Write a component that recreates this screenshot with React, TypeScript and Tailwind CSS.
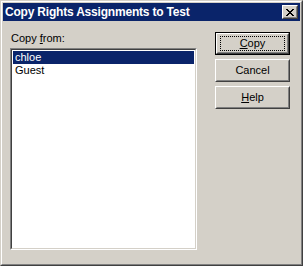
import React from "react";

function Btn({ label, u, def }: { label: string; u: number; def?: boolean }) {
  const text =
    u < 0 ? (
      <span>{label}</span>
    ) : (
      <span>
        {label.slice(0, u)}
        <span className="underline underline-offset-[1px]">{label[u]}</span>
        {label.slice(u + 1)}
      </span>
    );
  const inner = (
    <div className="h-full w-full border border-t-white border-l-white border-b-[#404040] border-r-[#404040]">
      <div className="h-full w-full border border-t-[#d4d0c8] border-l-[#d4d0c8] border-b-[#808080] border-r-[#808080] flex items-center justify-center">
        {def ? (
          <div className="border border-dotted border-black w-[65px] h-[15px] flex items-center justify-center">{text}</div>
        ) : (
          text
        )}
      </div>
    </div>
  );
  return (
    <div className={"w-[75px] h-[23px] " + (def ? "border border-black" : "")}>{inner}</div>
  );
}

export default function App() {
  return (
    <div
      className="w-[303px] h-[266px] bg-[#d4d0c8] border border-t-[#d4d0c8] border-l-[#d4d0c8] border-b-[#404040] border-r-[#404040] text-[11px] text-black"
      style={{ fontFamily: '"Liberation Sans", Arial, sans-serif' }}
    >
      <div className="h-full w-full border border-t-white border-l-white border-b-[#808080] border-r-[#808080] p-px flex flex-col">
        <div className="h-[18px] bg-[#0a246a] flex items-center justify-between pl-[2px] pr-[2px]">
          <span className="text-white font-bold text-[12px] leading-[14px] tracking-[-0.2px]">
            Copy Rights Assignments to Test
          </span>
          <div className="w-[16px] h-[14px] border border-t-white border-l-white border-b-[#404040] border-r-[#404040]">
            <div className="w-full h-full border border-t-[#d4d0c8] border-l-[#d4d0c8] border-b-[#808080] border-r-[#808080] bg-[#d4d0c8] flex items-center justify-center">
              <svg width="8" height="7" viewBox="0 0 8 7">
                <path d="M0 0h2v1h-2zM6 0h2v1h-2zM1 1h2v1h-2zM5 1h2v1h-2zM2 2h4v1h-4zM3 3h2v1h-2zM2 4h4v1h-4zM1 5h2v1h-2zM5 5h2v1h-2zM0 6h2v1h-2zM6 6h2v1h-2z" fill="#000" />
              </svg>
            </div>
          </div>
        </div>
        <div className="flex flex-1 pt-[11px] pl-[7px] pr-[10px] pb-[13px]">
          <div className="flex flex-col w-[187px]">
            <div className="leading-[13px] h-[13px] mb-[3px] pl-[1px]">
              Copy <span className="underline underline-offset-[1px]">f</span>rom:
            </div>
            <div className="flex-1 border border-t-[#808080] border-l-[#808080] border-b-white border-r-white">
              <div className="h-full w-full border border-t-[#404040] border-l-[#404040] border-b-[#d4d0c8] border-r-[#d4d0c8] bg-white p-px">
                <div className="h-[13px] leading-[13px] bg-[#0a246a] text-white pl-[2px]">chloe</div>
                <div className="h-[13px] leading-[13px] pl-[2px]">Guest</div>
              </div>
            </div>
          </div>
          <div className="ml-auto flex flex-col gap-[4px]">
            <Btn label="Copy" u={0} def />
            <Btn label="Cancel" u={-1} />
            <Btn label="Help" u={0} />
          </div>
        </div>
      </div>
    </div>
  );
}
